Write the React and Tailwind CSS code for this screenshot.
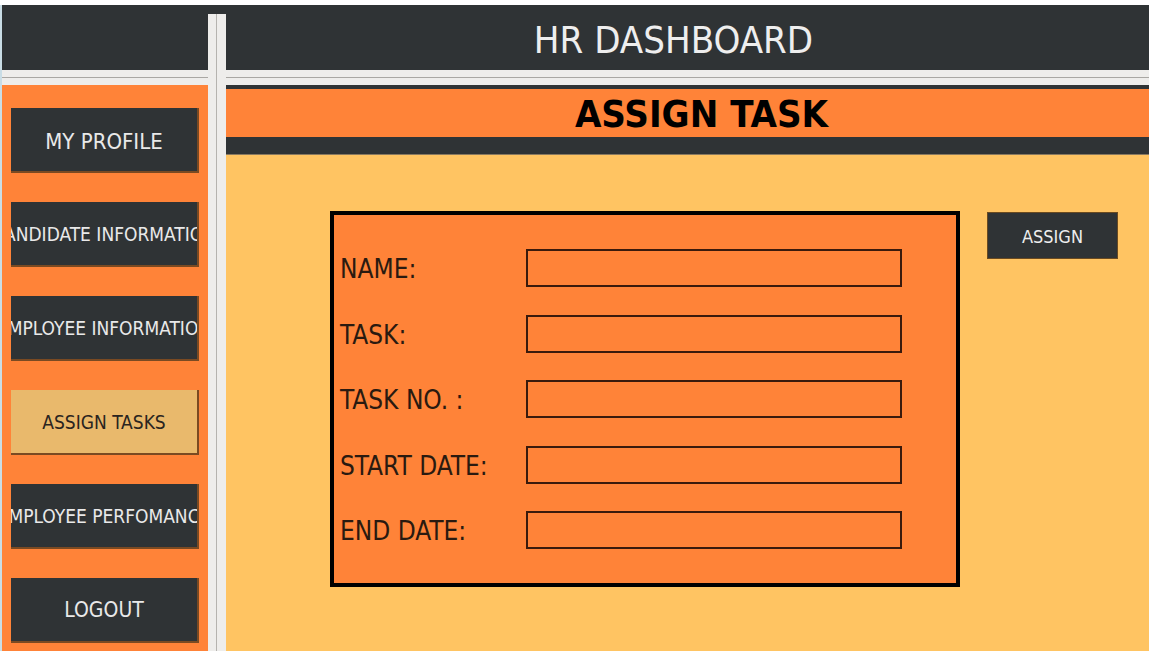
import React from "react";

const font = { fontFamily: '"DejaVu Sans Condensed", "DejaVu Sans", sans-serif' };

function SideButton({ label, active, size }) {
  return (
    <div
      className={
        "w-[188px] h-[65px] flex items-center justify-center overflow-hidden whitespace-nowrap border-b-2 border-r-2 border-[#7a4a22] pt-[2px] " +
        (size || "text-[19px] ") +
        (active ? " bg-[#e9b96c] text-[#2a2420]" : " bg-[#2f3335] text-[#e9e9e9]")
      }
    >
      {label}
    </div>
  );
}

function Strip() {
  return (
    <div className="h-[15px] bg-[#eeedeb] pt-[7px]">
      <div className="border-t border-[#a9a7a3]" />
    </div>
  );
}

function Field({ label }) {
  return (
    <div className="flex items-center h-[38px]">
      <div className="w-[186px] text-[26px] pt-[3px] text-[#2a1a10] whitespace-nowrap">{label}</div>
      <div className="w-[376px] h-[38px] border-2 border-[#3a1a0c]" />
    </div>
  );
}

export default function App() {
  return (
    <div className="w-[1149px] h-[651px] bg-white overflow-hidden flex flex-col" style={font}>
      <div className="h-[5px] bg-white" />
      <div className="flex-1 flex border-l-2 border-[#c9dde6] min-h-0">
        {/* Sidebar */}
        <div className="w-[206px] flex flex-col">
          <div className="h-[65px] bg-[#2f3335]" />
          <Strip />
          <div className="flex-1 bg-[#ff8338] pl-[9px] pt-[23px] flex flex-col gap-[29px]">
            <SideButton label="MY PROFILE" size="text-[22px] pt-[4px]" />
            <SideButton label="CANDIDATE INFORMATION" />
            <SideButton label="EMPLOYEE INFORMATION" />
            <SideButton label="ASSIGN TASKS" active />
            <SideButton label="EMPLOYEE PERFOMANCE" />
            <SideButton label="LOGOUT" size="text-[21px]" />
          </div>
        </div>
        {/* Divider */}
        <div className="w-[18px] flex flex-col">
          <div className="h-[9px] bg-[#2f3335]" />
          <div className="flex-1 bg-[#eeedeb] pl-[8px]">
            <div className="h-full border-l border-[#b5b3af]" />
          </div>
        </div>
        {/* Main */}
        <div className="flex-1 flex flex-col">
          <div className="h-[65px] bg-[#2f3335] flex items-center justify-center pr-[28px] pt-[6px] text-[38px] text-[#eeeeee]">
            HR DASHBOARD
          </div>
          <Strip />
          <div className="h-[4px] bg-[#2f3335]" />
          <div className="h-[48px] bg-[#ff8338] flex items-center justify-center pl-[28px] pt-[2px] text-[38px] font-bold text-black">
            ASSIGN TASK
          </div>
          <div className="h-[18px] bg-[#2f3335] border-b border-[#8a7a60]" />
          <div className="flex-1 bg-[#ffc462] flex items-start pl-[104px] pt-[56px]">
            <div className="w-[630px] border-4 border-black bg-[#ff8338] pl-[6px] py-[34px] flex flex-col gap-[27.5px]">
              <Field label="NAME:" />
              <Field label="TASK:" />
              <Field label="TASK NO. :" />
              <Field label="START DATE:" />
              <Field label="END DATE:" />
            </div>
            <div className="ml-[27px] mt-[1px] w-[131px] h-[47px] bg-[#2f3335] border border-[#6a4a20] flex items-center justify-center pt-[1px] text-[18px] text-[#eeeeee]">
              ASSIGN
            </div>
          </div>
        </div>
      </div>
    </div>
  );
}
